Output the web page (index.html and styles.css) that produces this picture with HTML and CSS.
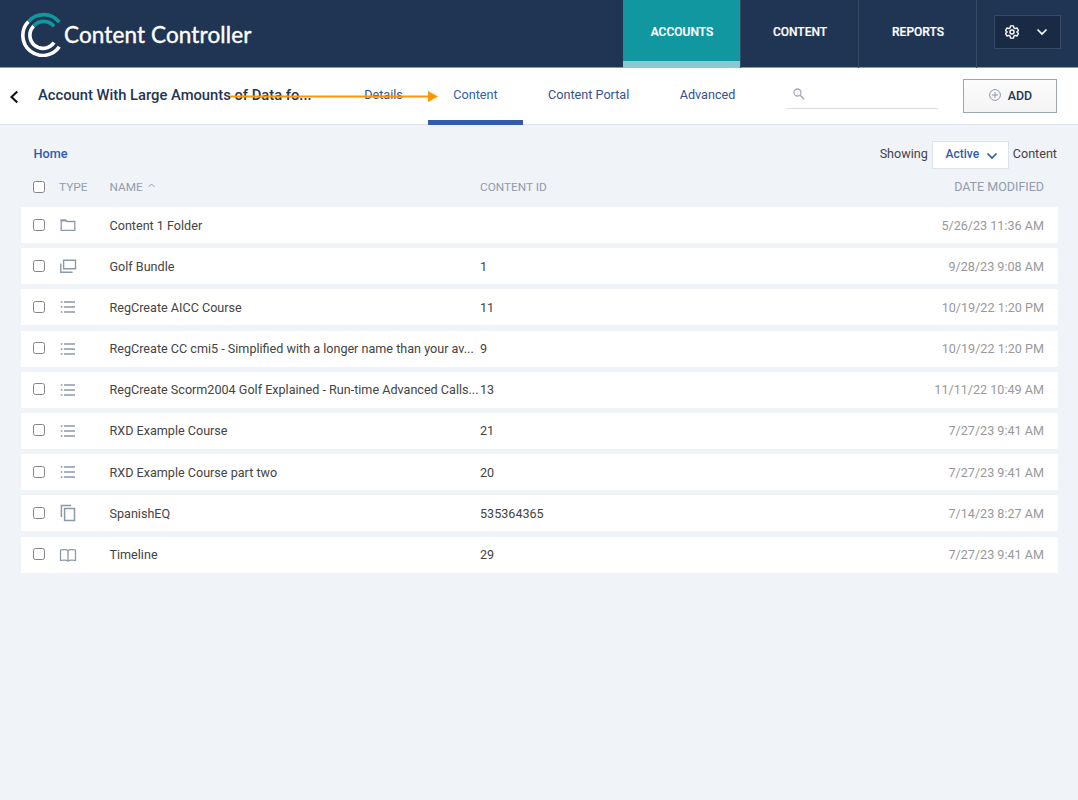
FILE: index.html
```html
<!doctype html>
<html lang="en">
   <head>
      <meta charset="utf-8">
      <meta name="viewport" content="width=device-width, initial-scale=1">
      <title>Content Controller</title>
      <link rel="stylesheet" href="styles.css">
   </head>
   <body>
      <!-- shared icons -->
      <svg class="sprite" width="0" height="0">
         <symbol id="list" viewBox="0 0 16 12"><path d="M.8 1h1.700M.8 6h1.700M.8 11h1.700M4 1h11M4 6h11M4 11h11" fill="none" stroke="currentColor" stroke-width="1.500"/></symbol>
         <symbol id="down" viewBox="0 0 12 8"><path d="M1.500 1.500L6 6l4.500-4.500" fill="none" stroke="currentColor" stroke-width="1.700"/></symbol>
      </svg>
      <header class="header">
         <div class="logo">
            <svg width="42" height="46" viewBox="0 0 42 46" fill="none" stroke-width="3.600">
               <path d="M7.500 10.500A20 20 0 1 0 38.300 35.800" stroke="#fff"/>
               <path d="M7.500 10.500A20 20 0 0 1 38.300 11.200" stroke="#1097a0"/>
               <path d="M12.700 14.900A13.200 13.200 0 1 0 33 31.600" stroke="#fff"/>
               <path d="M12.700 14.900A13.200 13.200 0 0 1 33 15.400" stroke="#1097a0"/>
            </svg>
            <span class="logo-text">Content Controller</span>
         </div>
         <nav class="nav">
            <a class="active">ACCOUNTS</a>
            <a>CONTENT</a>
            <a>REPORTS</a>
         </nav>
         <button class="settings">
            <svg width="14" height="14" viewBox="0 0 24 24" fill="none" stroke="#fff" stroke-width="2.400" stroke-linejoin="round"><path d="M9.500 1.500h5l.8 3.400 2.100 1.200 3.300-1 2.300 4.300-2.500 2.600 2.500 2.600-2.300 4.300-3.300-1-2.100 1.200-.8 3.400h-5l-.8-3.400-2.100-1.200-3.300 1L1 14.600 3.500 12 1 9.400l2.300-4.300 3.300 1 2.100-1.200z"/><circle cx="12" cy="12" r="3.500"/></svg>
            <svg width="12" height="8"><use href="#down"/></svg>
         </button>
      </header>
      <div class="subnav">
         <svg class="back" width="10" height="14" viewBox="0 0 10 14"><path d="M8.300 1.500L2.500 7l5.800 5.500" fill="none" stroke="#111" stroke-width="2.100"/></svg>
         <h1>Account With Large Amounts of Data fo...</h1>
         <nav class="tabs">
            <a>Details</a>
            <a class="active">Content</a>
            <a>Content Portal</a>
            <a>Advanced</a>
         </nav>
         <div class="search">
            <svg width="12" height="12" viewBox="0 0 12 12" fill="none" stroke="#a3abba"><circle cx="4.500" cy="4.500" r="3.500" stroke-width="1.300"/><path d="M7.200 7.200l4 4" stroke-width="1.600"/></svg>
         </div>
         <button class="add">
            <svg width="12" height="12" viewBox="0 0 12 12" fill="none" stroke="#8d97a8"><circle cx="6" cy="6" r="5.400"/><path d="M6 3v6M3 6h6"/></svg>
            ADD
         </button>
         <svg class="arrow" width="210" height="12" viewBox="0 0 210 12"><path d="M1 6.500h198" stroke="#ff9500" stroke-width="2"/><path d="M199 1v11l10-5.500z" fill="#ff9500"/></svg>
      </div>
      <main>
         <div class="toolbar">
            <a class="home">Home</a>
            <div class="filter">
               <span>Showing</span>
               <button class="select">Active <svg width="12" height="8"><use href="#down"/></svg></button>
               <span>Content</span>
            </div>
         </div>
         <div class="table">
            <div class="row head">
               <input type="checkbox"><span>TYPE</span>
               <span class="name">NAME <svg width="7" height="5" viewBox="0 0 7 5"><path d="M.5 4l3-3 3 3" fill="none" stroke="currentColor"/></svg></span>
               <span>CONTENT ID</span><span class="date">DATE MODIFIED</span>
            </div>
            <div class="row">
               <input type="checkbox">
               <svg class="icon" width="18" height="16" viewBox="0 0 18 16"><path d="M2.200 13V3.200h4.500l1.400 1.300h7.700V13.300H2.200z" fill="none" stroke="currentColor" stroke-width="1.300"/><path d="M1.600 2.400h5.200l1.800 2.200H1.600z" fill="currentColor"/></svg>
               <span class="name">Content 1 Folder</span><span></span><span class="date">5/26/23 11:36 AM</span>
            </div>
            <div class="row">
               <input type="checkbox">
               <svg class="icon" width="18" height="16" viewBox="0 0 18 16" fill="none" stroke="currentColor" stroke-width="1.400"><path d="M4.600 2.200h11.900v8.600H4.600zM1.800 5.500v8.700h11.800"/></svg>
               <span class="name">Golf Bundle</span><span>1</span><span class="date">9/28/23 9:08 AM</span>
            </div>
            <div class="row">
               <input type="checkbox">
               <svg class="icon" width="16" height="12"><use href="#list"/></svg>
               <span class="name">RegCreate AICC Course</span><span>11</span><span class="date">10/19/22 1:20 PM</span>
            </div>
            <div class="row">
               <input type="checkbox">
               <svg class="icon" width="16" height="12"><use href="#list"/></svg>
               <span class="name">RegCreate CC cmi5 - Simplified with a longer name than your av...</span><span>9</span><span class="date">10/19/22 1:20 PM</span>
            </div>
            <div class="row">
               <input type="checkbox">
               <svg class="icon" width="16" height="12"><use href="#list"/></svg>
               <span class="name">RegCreate Scorm2004 Golf Explained - Run-time Advanced Calls...</span><span>13</span><span class="date">11/11/22 10:49 AM</span>
            </div>
            <div class="row">
               <input type="checkbox">
               <svg class="icon" width="16" height="12"><use href="#list"/></svg>
               <span class="name">RXD Example Course</span><span>21</span><span class="date">7/27/23 9:41 AM</span>
            </div>
            <div class="row">
               <input type="checkbox">
               <svg class="icon" width="16" height="12"><use href="#list"/></svg>
               <span class="name">RXD Example Course part two</span><span>20</span><span class="date">7/27/23 9:41 AM</span>
            </div>
            <div class="row">
               <input type="checkbox">
               <svg class="icon" width="18" height="18" viewBox="0 0 18 18" fill="none" stroke="currentColor" stroke-width="1.500"><path d="M5.600 4.600h9.900v12H5.600zM2.400 13V1.500h9.600"/></svg>
               <span class="name">SpanishEQ</span><span>535364365</span><span class="date">7/14/23 8:27 AM</span>
            </div>
            <div class="row">
               <input type="checkbox">
               <svg class="icon" width="18" height="16" viewBox="0 0 18 16" fill="none" stroke="currentColor" stroke-width="1.300"><path d="M9 3.600C7.500 2.400 3.500 2.400 1.500 3v10.500c2-.6 6-.6 7.500.600 1.500-1.200 5.500-1.200 7.500-.600V3C14.500 2.400 10.500 2.400 9 3.600zM9 3.600v10.500"/></svg>
               <span class="name">Timeline</span><span>29</span><span class="date">7/27/23 9:41 AM</span>
            </div>
         </div>
      </main>
   </body>
</html>
```

FILE: styles.css
```css
* { box-sizing: border-box; }
body {
margin: 0;
min-height: 100vh;
background: #f0f3f8;
color: #444;
font-family: Roboto, sans-serif;
font-size: 12.6px;
}
button { font-family: inherit; padding: 0; }
.sprite { position: absolute; }
.header {
display: flex;
height: 68px;
background: #1f3553;
border-bottom: 1px solid #8c98a9;
}
.logo {
display: flex;
flex: 1;
align-items: center;
padding-left: 20.5px;
color: #fff;
}
.logo-text {
margin: 2px 0 0 1.5px;
font-family: Lato, sans-serif;
font-size: 22.5px;
letter-spacing: .12px;
-webkit-text-stroke: .4px #fff;
white-space: nowrap;
}
.nav { display: flex; height: 68px; }
.nav a {
width: 118px;
padding: 24px 0 0 1px;
border-right: 1px solid #364a66;
color: #fff;
font-size: 12px;
font-weight: 500;
line-height: 16px;
text-align: center;
-webkit-text-stroke: .2px #fff;
}
.nav .active { background: #1097a0; background-clip: padding-box; box-shadow: inset 0 -7px #86c9d0; }
.settings {
display: flex;
align-items: center;
justify-content: space-between;
width: 67px;
height: 34px;
margin: 15px 17px 0;
padding: 0 12px 0 10px;
border: 1px solid #364a66;
background: #192b44;
color: #fff;
}
.subnav {
position: relative;
display: flex;
height: 57px;
background: #fff;
border-bottom: 1px solid #dfe3e9;
}
.back { margin: 22px 0 0 9px; }
h1 {
width: 301px;
margin: 18px 0 0;
padding-left: 19px;
color: #1f3553;
font-size: 14.75px;
font-weight: 500;
line-height: 18px;
white-space: nowrap;
}
.tabs { display: flex; margin-left: 19px; }
.tabs a {
height: 57px;
padding: 18px 25.2px 0;
color: #34518c;
font-size: 12.65px;
line-height: 17px;
white-space: nowrap;
}
.tabs .active { color: #325cab; border-bottom: 5px solid #325cab; }
.search {
width: 152px;
height: 41px;
margin-left: auto;
padding: 20px 7px;
border-bottom: 1px solid #dcdfe5;
}
.add {
display: flex;
align-items: center;
justify-content: center;
gap: 7px;
width: 94px;
height: 34px;
margin: 11px 21px 0 25px;
padding: 0 0 2px 1px;
border: 1px solid #9aa5b5;
background: linear-gradient(#fcfcfd, #f4f4f5);
color: #1f3553;
font-size: 12.4px;
font-weight: 500;
}
/* pointer drawn over the tabs */
.arrow { position: absolute; left: 229px; top: 22px; }
main { padding: 16px 20px 0 21px; }
.toolbar {
display: flex;
align-items: center;
justify-content: space-between;
height: 28px;
padding: 0 1px 0 12.5px;
}
.home { padding-bottom: 4px; color: #325cab; font-weight: 500; font-size: 12.7px; }
.filter { display: flex; align-items: center; gap: 4px; }
.filter span { padding-bottom: 4px; }
.select {
display: flex;
align-items: center;
justify-content: center;
gap: 7px;
width: 77px;
height: 28px;
padding: 0 0 2px 3px;
border: 1px solid #dde3ec;
background: #fff;
color: #325cab;
font-size: 12px;
font-weight: 500;
}
.select svg { margin-top: 3px; }
.row {
display: grid;
grid-template-columns: 26px 50.5px 370.5px 1fr 120px;
align-items: center;
height: 36px;
margin-bottom: 5.2px;
padding: 0 14px 0 12px;
background: #fff;
white-space: nowrap;
}
.head {
height: 36px;
margin-bottom: 2px;
background: none;
color: #929cad;
font-size: 11.8px;
}
.row input {
appearance: none;
width: 12px;
height: 12px;
margin: 0 0 1px;
border: 1px solid #858585;
border-radius: 2.5px;
background: #fff;
}
.icon { color: #8d97ab; justify-self: center; margin-right: 32px; }
.name svg { margin: 0 0 3px 2px; }
.date { color: #999; text-align: right; }
.head .date { padding-bottom: 1px; color: inherit; font-size: 12.5px; }
```
